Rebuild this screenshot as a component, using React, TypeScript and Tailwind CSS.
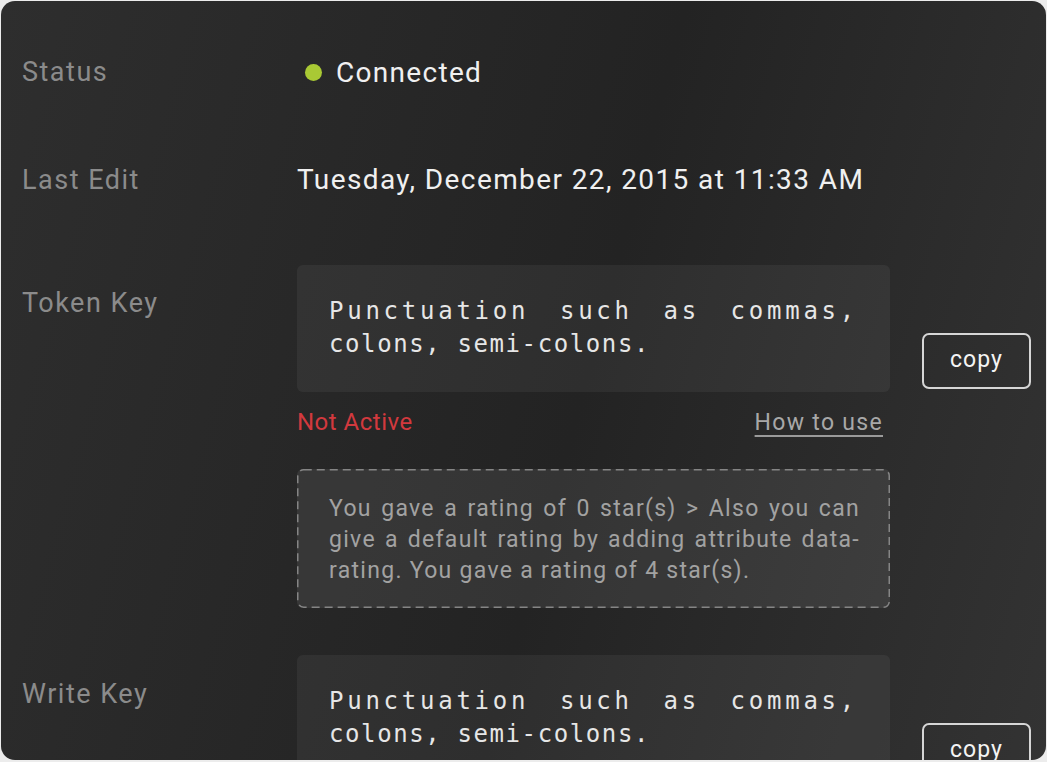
const sans = { fontFamily: "Roboto, 'Liberation Sans', sans-serif" };
const mono = { fontFamily: "'DejaVu Sans Mono', 'Liberation Mono', monospace" };

function Label({ children, className = "" }: { children: React.ReactNode; className?: string }) {
  return (
    <div className={`w-[275px] shrink-0 text-[27px] leading-[40px] tracking-[1.5px] text-[#8b8b8b] ${className}`}>
      {children}
    </div>
  );
}

// the original spreads the first (justified) line letter by letter, the last line stays tight
function KeyRow({ label, labelPad }: { label: string; labelPad: string }) {
  return (
    <div className="flex">
      <Label className={labelPad}>{label}</Label>
      <div
        className="w-[593px] shrink-0 rounded-[6px] bg-white/[0.05] px-[32px] pt-[30px] pb-[31px] text-[24px] leading-[33px] tracking-[1.6px] text-[#e6e6e6]"
        style={mono}
      >
        <span className="block tracking-[3.75px] [text-align-last:justify]">Punctuation such as commas,</span>
        <span className="block">colons, semi-colons.</span>
      </div>
      <button className="mb-[3px] ml-[32px] h-[56px] w-[109px] shrink-0 self-end rounded-[7px] border-2 border-[#d6d6d6] text-[23px] tracking-[1px] text-[#f4f4f4]">
        copy
      </button>
    </div>
  );
}

export default function App() {
  return (
    <div className="min-h-screen bg-[#ececec] p-px" style={sans}>
      <div className="h-[759px] overflow-hidden rounded-[14px] bg-[linear-gradient(105deg,#2e2e2e_0%,#262626_40%,#232323_55%,#333333_100%)] pl-[21px] pt-[51px]">
        {/* Status */}
        <div className="flex items-baseline">
          <Label>Status</Label>
          <div className="flex items-center gap-[14px] pl-2">
            <span className="h-[17px] w-[17px] rounded-full bg-[#a9c934]" />
            <span className="text-[28px] leading-[40px] tracking-[1.3px] text-[#f0f0f0]">Connected</span>
          </div>
        </div>

        {/* Last edit */}
        <div className="mt-[67px] flex items-baseline">
          <Label>Last Edit</Label>
          <span className="text-[28px] leading-[40px] tracking-[1.4px] text-[#f0f0f0]">
            Tuesday, December 22, 2015 at 11:33 AM
          </span>
        </div>

        {/* Token key */}
        <div className="mt-[65px]">
          <KeyRow label="Token Key" labelPad="pt-[18px]" />
          <div className="ml-[275px] w-[593px]">
            <div className="mt-[14px] flex items-baseline justify-between">
              <span className="text-[24px] leading-[32px] tracking-[0.5px] text-[#d2393e]">Not Active</span>
              <a className="mr-[7px] text-[23px] leading-[32px] tracking-[1.3px] text-[#a8a8a8] underline decoration-[#9a9a9a] decoration-2 underline-offset-[5px]">
                How to use
              </a>
            </div>
            <div className="relative mt-[30px] rounded-[6px] bg-white/[0.08] pl-[32px] pr-[30px] pt-[24px] pb-[22px] text-[23px] leading-[31px] tracking-[1.3px] text-justify text-[#a2a2a2]">
              <svg className="pointer-events-none absolute inset-0 h-full w-full" aria-hidden="true">
                <rect
                  x="0.75"
                  y="0.75"
                  rx="6"
                  className="h-[calc(100%-1.5px)] w-[calc(100%-1.5px)]"
                  fill="none"
                  stroke="#858585"
                  strokeWidth="1.5"
                  strokeDasharray="8 5"
                />
              </svg>
              You gave a rating of 0 star(s) &gt; Also you can give a default rating by adding
              attribute data-rating. You gave a rating of 4 star(s).
            </div>
          </div>
        </div>

        {/* Write key */}
        <div className="mt-[47px]">
          <KeyRow label="Write Key" labelPad="pt-[19px]" />
        </div>
      </div>
    </div>
  );
}
